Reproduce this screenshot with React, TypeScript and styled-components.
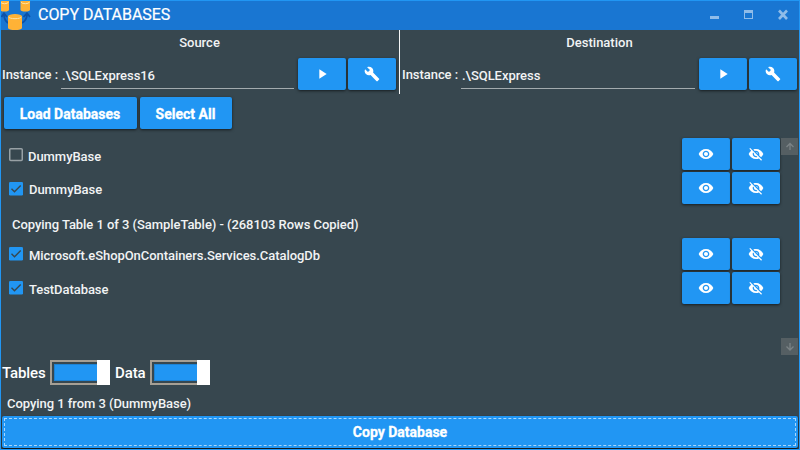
import React from "react";
import styled, { createGlobalStyle, css } from "styled-components";
import { MdPlayArrow, MdBuild, MdVisibility, MdVisibilityOff } from "react-icons/md";

const Global = createGlobalStyle`
  * { box-sizing: border-box; }
  body { margin: 0; background: #37474f; font-family: Roboto, "Noto Sans", sans-serif; }
`;

const Window = styled.div`
  width: 800px;
  height: 450px;
  display: flex;
  flex-direction: column;
  border: 1px solid #2196f3;
  background: #37474f;
  color: #f1f3f4;
  font-size: 13px;
  font-weight: 500;
  line-height: 16px;
  white-space: nowrap;
  overflow: hidden;
`;

const TitleBar = styled.header`
  height: 29px;
  flex: none;
  display: flex;
  background: #1976d2;
`;

const Logo = styled.svg`
  width: 30px;
  height: 29px;
  flex: none;
`;

const Title = styled.h1`
  margin: 0 auto 0 7px;
  font-size: 16px;
  font-weight: 400;
  line-height: 28px;
  letter-spacing: -0.03px;
  color: #fff;
  -webkit-text-stroke: 0.2px #fff;
`;

const WindowControls = styled.svg`
  width: 102px;
  height: 29px;
  flex: none;
`;

const Connections = styled.section`
  display: flex;
  height: 64px;
  flex: none;
`;

const Connection = styled.div<{ $divided?: boolean }>`
  width: 399px;
  ${(p) => (p.$divided ? css`border-right: 1px solid #f5f7f8;` : css`padding-left: 1px;`)}
`;

const Heading = styled.div`
  height: 28px;
  padding: 5px 1px 0 0;
  text-align: center;
`;

const InstanceRow = styled.div`
  display: flex;
  height: 32px;
  padding-left: 1px;
`;

const InstanceLabel = styled.label`
  width: 59px;
  padding-top: 9px;
  letter-spacing: -0.05px;
`;

const InstanceField = styled.div<{ $width: number }>`
  width: ${(p) => p.$width}px;
  height: 31px;
  padding: 10px 0 0 1px;
  margin-right: 4px;
  border-bottom: 1px solid #a3abae;
  letter-spacing: -0.05px;
`;

const ButtonPair = styled.div`
  display: flex;
  gap: 2px;
`;

const Button = styled.button<{ $width?: number }>`
  width: ${(p) => p.$width ?? 48}px;
  height: 32px;
  padding: 0;
  flex: none;
  display: flex;
  align-items: center;
  justify-content: center;
  border: 0;
  border-radius: 2px;
  background: #2196f3;
  color: #fff;
  box-shadow: 0 1px 3px rgba(0, 0, 0, 0.6);
  font: 700 14px/16px Roboto, sans-serif;
`;

const ButtonText = styled.span`
  padding: 2px 1px 0 0;
  -webkit-text-stroke: 0.3px #fff;
`;

const Toolbar = styled.div`
  display: flex;
  gap: 3px;
  height: 44px;
  padding: 3px 0 0 3px;
  flex: none;
`;

const ListArea = styled.section`
  display: flex;
  height: 217px;
  flex: none;
`;

const List = styled.div`
  width: 780px;
`;

const Row = styled.div`
  display: flex;
  height: 34px;
  padding: 0 1px 0 8px;
`;

const RowLabel = styled.span<{ $indent: number; $top: number }>`
  flex: 1;
  padding: ${(p) => p.$top}px 0 0 ${(p) => p.$indent}px;
  letter-spacing: -0.06px;
`;

const CheckIcon = styled.svg<{ $top: number }>`
  width: 14px;
  height: 14px;
  flex: none;
  margin-top: ${(p) => p.$top}px;
`;

const Progress = styled.div`
  height: 32px;
  padding: 11px 0 0 11px;
  letter-spacing: -0.055px;
`;

const ScrollBar = styled.div`
  width: 17px;
  display: flex;
  flex-direction: column;
  justify-content: space-between;
`;

const ScrollArrow = styled.svg`
  width: 17px;
  height: 17px;
  background: #555f63;
`;

const Options = styled.div`
  display: flex;
  height: 36px;
  padding: 5px 0 0 1px;
  flex: none;
`;

const OptionLabel = styled.span<{ $width: number }>`
  width: ${(p) => p.$width}px;
  padding-top: 5px;
  font-size: 15px;
  letter-spacing: -0.12px;
  color: #fff;
`;

const Switch = styled.span`
  display: flex;
  width: 60px;
  height: 25px;
  margin-right: 5px;
  border: 2px solid #a69f94;
  border-right: 0;
`;

const SwitchTrack = styled.span`
  flex: 1;
  margin: 2px 0 2px 2px;
  background: #2196f3;
  border: 1px solid #1e82d2;
  border-right: 0;
`;

const SwitchThumb = styled.span`
  width: 13px;
  height: 25px;
  margin: -2px 0;
  background: #fff;
`;

const Status = styled.div`
  height: 25px;
  padding: 5px 0 0 6px;
  flex: none;
  letter-spacing: -0.05px;
`;

const CopyButton = styled.button`
  width: 796px;
  height: 32px;
  margin-left: 1px;
  padding: 0;
  flex: none;
  border: 0;
  border-radius: 2px;
  background: #2196f3;
  color: #fff;
  font: 700 14px/26px Roboto, sans-serif;
  -webkit-text-stroke: 0.3px #fff;
  outline: 1px dashed #a9d6fa;
  outline-offset: -3px;
  box-shadow: 0 1px 2px rgba(0, 0, 0, 0.9);
`;

function Cylinder({ x, y, w, h }: { x: number; y: number; w: number; h: number }) {
  const r = w / 2;
  return (
    <g transform={`translate(${x} ${y})`}>
      <path d={`M0 2.2A${r} 2.2 0 0 1 ${w} 2.2V${h - 2}A${r} 2 0 0 1 0 ${h - 2}Z`} fill="#ffb236" />
      <path d={`M.6 2.8A${r - 0.6} 1.9 0 0 0 ${w - 0.6} 2.8`} fill="none" stroke="#ffe2a0" strokeWidth="1" />
    </g>
  );
}

function DatabaseLogo() {
  return (
    <Logo viewBox="1 1 30 29">
      <g fill="none" stroke="#0d52a8" strokeWidth="1.8">
        <path d="M8 23Q4 20 4 14M1.5 17L4 13.2L7 17" />
        <path d="M22 23Q27 20 27 14M23.5 17L27 13.2L30 17" />
      </g>
      <Cylinder x={0} y={-1} w={9} h={12.5} />
      <Cylinder x={20.5} y={-1} w={9.5} h={12.5} />
      <Cylinder x={8} y={14} w={14} h={16} />
    </Logo>
  );
}

function Checkbox({ checked, top }: { checked: boolean; top: number }) {
  return (
    <CheckIcon viewBox="0 0 14 14" $top={top}>
      {checked ? (
        <>
          <rect width="14" height="13.5" rx="1.3" fill="#2196f3" />
          <path d="M2.5 6.8L5.5 9.8L11.7 3.6" fill="none" stroke="#37474f" strokeWidth="1.4" />
        </>
      ) : (
        <rect x=".75" y=".75" width="12.5" height="11.8" rx="1" fill="none" stroke="#98a1a5" strokeWidth="1.5" />
      )}
    </CheckIcon>
  );
}

function ConnectionPanel(p: { heading: string; instance: string; fieldWidth: number; divided?: boolean }) {
  return (
    <Connection $divided={p.divided}>
      <Heading>{p.heading}</Heading>
      <InstanceRow>
        <InstanceLabel>Instance :</InstanceLabel>
        <InstanceField $width={p.fieldWidth}>{p.instance}</InstanceField>
        <ButtonPair>
          <Button aria-label="Connect"><MdPlayArrow size={16} /></Button>
          <Button aria-label="Configure"><MdBuild size={16} /></Button>
        </ButtonPair>
      </InstanceRow>
    </Connection>
  );
}

function DatabaseRow(p: { name: string; checked: boolean; top: number; indent?: number; labelTop?: number }) {
  return (
    <Row>
      <Checkbox checked={p.checked} top={p.top} />
      <RowLabel $indent={p.indent ?? 6} $top={p.labelTop ?? 10}>{p.name}</RowLabel>
      <ButtonPair>
        <Button aria-label="Show"><MdVisibility size={16} /></Button>
        <Button aria-label="Hide"><MdVisibilityOff size={16} /></Button>
      </ButtonPair>
    </Row>
  );
}

function Toggle() {
  return (
    <Switch>
      <SwitchTrack />
      <SwitchThumb />
    </Switch>
  );
}

export default function App() {
  return (
    <>
      <Global />
      <Window>
        <TitleBar>
          <DatabaseLogo />
          <Title>COPY DATABASES</Title>
          <WindowControls viewBox="697 1 102 29">
            <path d="M710 16H719V19H710Z" fill="#8fbce9" />
            <path d="M744 10H753V19H744ZM745 13V18H752V13Z" fill="#8fbce9" fillRule="evenodd" />
            <path d="M779 10.5L787 19M787 10.5L779 19" stroke="#8fbce9" strokeWidth="2.6" />
          </WindowControls>
        </TitleBar>
        <Connections>
          <ConnectionPanel heading="Source" instance=".\SQLExpress16" fieldWidth={233} divided />
          <ConnectionPanel heading="Destination" instance=".\SQLExpress" fieldWidth={234} />
        </Connections>
        <Toolbar>
          <Button $width={133}><ButtonText>Load Databases</ButtonText></Button>
          <Button $width={92}><ButtonText>Select All</ButtonText></Button>
        </Toolbar>
        <ListArea>
          <List>
            <DatabaseRow name="DummyBase" checked={false} top={10} indent={5} labelTop={11} />
            <DatabaseRow name="DummyBase" checked top={10} />
            <Progress>Copying Table 1 of 3 (SampleTable) - (268103 Rows Copied)</Progress>
            <DatabaseRow name="Microsoft.eShopOnContainers.Services.CatalogDb" checked top={9} />
            <DatabaseRow name="TestDatabase" checked top={9} />
          </List>
          <ScrollBar>
            <ScrollArrow viewBox="0 0 17 17">
              <path d="M9 12V5.5M5.5 9L9 5.5L12.5 9" fill="none" stroke="#7b8386" strokeWidth="1.3" />
            </ScrollArrow>
            <ScrollArrow viewBox="0 0 17 17">
              <path d="M9 5V12M5.5 8.5L9 12L12.5 8.5" fill="none" stroke="#7b8386" strokeWidth="1.3" />
            </ScrollArrow>
          </ScrollBar>
        </ListArea>
        <Options>
          <OptionLabel $width={48}>Tables</OptionLabel>
          <Toggle />
          <OptionLabel $width={35}>Data</OptionLabel>
          <Toggle />
        </Options>
        <Status>Copying 1 from 3 (DummyBase)</Status>
        <CopyButton>Copy Database</CopyButton>
      </Window>
    </>
  );
}
